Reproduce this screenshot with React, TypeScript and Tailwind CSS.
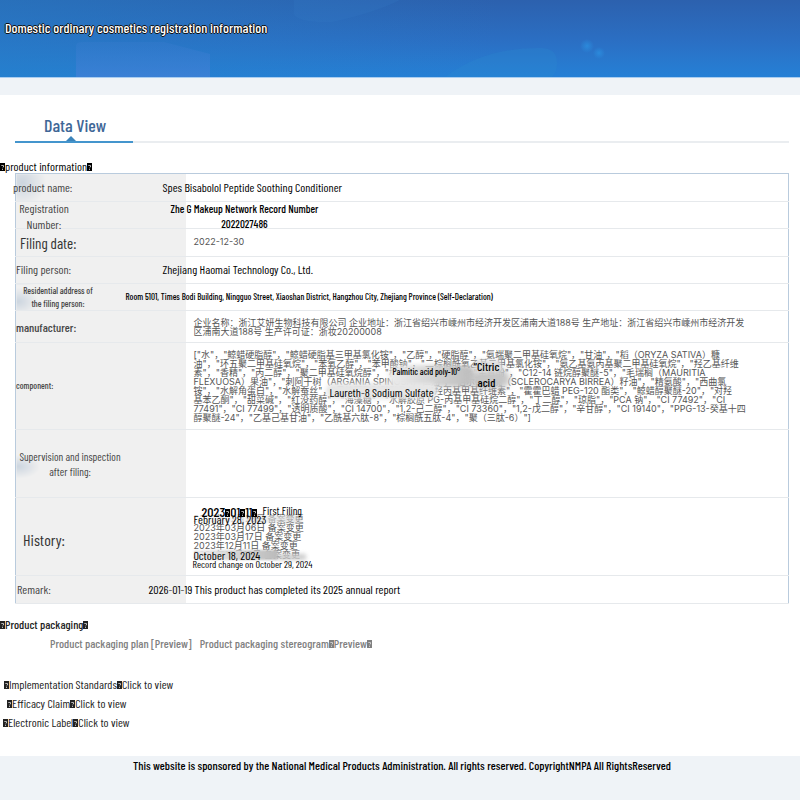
import type { ReactNode } from 'react'

const manufacturer = [
  '企业名称：浙江艾妍生物科技有限公司 企业地址：浙江省绍兴市嵊州市经济开发区浦南大道188号 生产地址：浙江省绍兴市嵊州市经济开发',
  '区浦南大道188号 生产许可证：浙妆20200008',
]

const ingredients = [
  '["水"，"鲸蜡硬脂醇"，"鲸蜡硬脂基三甲基氯化铵"，"乙醇"，"硬脂醇"，"氨端聚二甲基硅氧烷"，"甘油"，"稻（ORYZA SATIVA）糠',
  '油"，"环五聚二甲基硅氧烷"，"苯氧乙醇"，"苯甲酸钠"，"二棕榈酰氧乙基二甲基氯化铵"，"氨乙基氨丙基聚二甲基硅氧烷"，"羟乙基纤维',
  '素"，"香精"，"丙二醇"，"聚二甲基硅氧烷醇"，"棕榈酸"，"柠檬酸"，"生育酚"，"C12-14 链烷醇聚醚-5"，"毛瑞榈（MAURITIA',
  'FLEXUOSA）果油"，"刺阿干树（ARGANIA SPINOSA）仁油"，"伯尔硬胡桃（SCLEROCARYA BIRREA）籽油"，"精氨酸"，"西曲氯',
  '铵"，"水解角蛋白"，"水解蚕丝"，"月桂醇聚醚硫酸酯钠"，"羟丙基甲基纤维素"，"霍霍巴蜡 PEG-120 酯类"，"鲸蜡醇聚醚-20"，"对羟',
  '基苯乙酮"，"甜菜碱"，"红没药醇"，"海藻糖"，"水解胶原 PG-丙基甲基硅烷二醇"，"丁二醇"，"琼脂"，"PCA 钠"，"CI 77492"，"CI',
  '77491"，"CI 77499"，"透明质酸"，"CI 14700"，"1,2-己二醇"，"CI 73360"，"1,2-戊二醇"，"辛甘醇"，"CI 19140"，"PPG-13-癸基十四',
  '醇聚醚-24"，"乙基己基甘油"，"乙酰基六肽-8"，"棕榈酰五肽-4"，"聚（三肽-6）"]',
]

const history = [
  '2023年02月28日 备案变更',
  '2023年03月06日 备案变更',
  '2023年03月17日 备案变更',
  '2023年12月11日 备案变更',
  '2024年10月18日 备案变更',
]

function Mark() {
  return (
    <svg viewBox="0 0 5 8" className="inline-block h-2 w-[5px] align-[0px]" aria-hidden="true">
      <rect width="5" height="8" fill="currentColor" />
      <path d="M1.3 2.5h2.2v1.5l-1 .8M2.5 5.8v1.2" stroke="#ddd" strokeWidth=".8" fill="none" />
    </svg>
  )
}

function Lines({ lines }: { lines: string[] }) {
  return (
    <div className="ml-2 whitespace-nowrap font-['Inter','Noto_Sans_CJK_SC',sans-serif] text-[9px] leading-[9px] text-[#555]">
      {lines.map((line) => (
        <p key={line}>{line}</p>
      ))}
    </div>
  )
}

type RowProps = { height: string; label: ReactNode; labelClass: string; smudge?: string; children?: ReactNode }

function Row({ height, label, labelClass, smudge = '', children }: RowProps) {
  return (
    <tr className={`border-b border-[#e6e9ec] ${height}`}>
      <th
        scope="row"
        className={`w-[170px] bg-[#f0f0f0] p-0 text-left align-middle font-normal text-[#444] ${smudge}`}
      >
        <div className={labelClass}>{label}</div>
      </th>
      <td className="relative p-0 align-middle whitespace-nowrap text-black">{children}</td>
    </tr>
  )
}

function Banner() {
  return (
    <header className="relative h-[78px] overflow-hidden border-b border-[#a9cdf0] bg-linear-to-b from-[#2c61ae] via-[#2b6ec2] to-[#2580d6]">
      <svg viewBox="0 0 800 77" preserveAspectRatio="none" className="absolute inset-0 h-full w-full" aria-hidden="true">
        <defs>
          <linearGradient id="teal" x1="0" x2="1">
            <stop offset="0" stopColor="#2580c8" stopOpacity=".5" />
            <stop offset="1" stopColor="#2580c8" stopOpacity="0" />
          </linearGradient>
          <linearGradient id="panel" x1="0" y1="0" x2="0" y2="1">
            <stop offset="0" stopColor="#3a7ccf" stopOpacity=".3" />
            <stop offset="1" stopColor="#4080d6" stopOpacity=".8" />
          </linearGradient>
          <radialGradient id="dot">
            <stop offset="0" stopColor="#2b8fe0" stopOpacity=".8" />
            <stop offset="1" stopColor="#2b8fe0" stopOpacity="0" />
          </radialGradient>
        </defs>
        <rect width="500" height="77" fill="url(#teal)" />
        <path d="M76 77V46q0-4 6-4h82l46 12v23z" fill="url(#panel)" />
        <path d="M294 0v14q4 9 38 8q42-9 68-22z" fill="#397bc6" opacity=".2" />
        <path d="M445 77q40-30 97-29q19 1 14 23l-4 6z" fill="#2d8bd0" opacity=".25" />
        <circle cx="587" cy="46" r="7" fill="url(#dot)" />
        <circle cx="599" cy="53" r="6" fill="url(#dot)" />
      </svg>
      <h1 className="relative pt-4 pl-[5px] text-sm leading-6 font-medium text-white [text-shadow:1px_0_#111,-1px_0_#111,0_1px_#111,0_-1px_#111]">
        Domestic ordinary cosmetics registration information
      </h1>
    </header>
  )
}

export default function App() {
  return (
    <div className="min-h-screen bg-[#eff3f7] font-['Barlow_Condensed','Noto_Sans_CJK_SC',sans-serif] text-xs text-[#222]">
      <Banner />
      <main className="mt-[17px] bg-white pb-6">
        <div className="mr-[11px] ml-[15px] h-12 border-b-2 border-[#eaedf0]">
          <h2 className="relative h-12 w-[118px] border-b-2 border-[#4495cd] pt-[18px] pl-[29px] text-lg leading-6 font-medium text-[#3f6797]">
            Data View
            <svg viewBox="0 0 10 5" className="absolute bottom-0 left-[51px] h-[5px] w-[10px]" aria-hidden="true">
              <path d="M0 5L5 0l5 5z" fill="#3b83ba" />
            </svg>
          </h2>
        </div>

        <h3 className="pt-[15px] leading-4 text-black">
          <Mark />product information<Mark />
        </h3>
        <div className="mr-[11px] ml-[15px]">
          <table className="-mt-px w-full border-collapse border border-[#b9cbdd]">
            <tbody>
              <Row
                height="h-7"
                label="product name:"
                labelClass="-ml-[3px] pb-0.5 leading-4"
                smudge="bg-[radial-gradient(ellipse_24px_24px_at_6px_8px,#ccd5df,#f0f0f0)]"
              >
                <p className="-ml-[23px] pb-0.5 leading-4">Spes Bisabolol Peptide Soothing Conditioner</p>
              </Row>
              <Row
                height="h-[27px]"
                label={<>Registration<br />Number:</>}
                labelClass="-mt-0.5 -mb-1 w-14 text-center leading-4"
              >
                <p className="-mt-0.5 -mb-1 -ml-[18px] w-[154px] text-center text-[11px] leading-[15px] font-medium">
                  Zhe G Makeup Network Record Number
                  <br />
                  2022027486
                </p>
              </Row>
              <Row height="h-7" label="Filing date:" labelClass="ml-1 text-[15px] leading-4 text-[#333]">
                <div className="pb-0.5">
                  <Lines lines={['2022-12-30']} />
                </div>
              </Row>
              <Row height="h-[27px]" label="Filing person:" labelClass="pb-0.5 leading-4">
                <p className="-ml-[23px] pb-0.5 leading-4">Zhejiang Haomai Technology Co., Ltd.</p>
              </Row>
              <Row
                height="h-[27px]"
                label={<>Residential address of<br />the filing person:</>}
                labelClass="w-[84px] text-center text-[9px] leading-[13px] font-medium"
                smudge="bg-[radial-gradient(ellipse_20px_14px_at_2px_17px,#ccd5df,#f0f0f0)]"
              >
                <p className="-ml-[60px] text-[9px] leading-3 font-medium">
                  Room 5101, Times Bodi Building, Ningguo Street, Xiaoshan District, Hangzhou City, Zhejiang Province
                  (Self-Declaration)
                </p>
              </Row>
              <Row height="h-8" label="manufacturer:" labelClass="leading-4 font-medium">
                <Lines lines={manufacturer} />
              </Row>
              <Row height="h-[87px]" label="component:" labelClass="text-[9px] leading-3 font-medium">
                <Lines lines={ingredients} />
                <div className="absolute top-[22px] left-[202px] h-[22px] w-[88px] rounded-full bg-linear-to-r from-[#eee] to-[#bbb] blur-[2px]" />
                <div className="absolute top-[26px] left-[284px] h-5 w-10 rounded-full bg-[#c6c6c6] blur-[3px]" />
                <div className="absolute top-[17px] left-[288px] h-3 w-7 bg-[#ddd] blur-[2px]" />
                <div className="absolute top-10 left-[140px] h-4 w-[112px] rounded-full bg-[#e6e6e6] blur-[2px]" />
                <span className="absolute top-[23px] left-[207px] text-[9px] leading-3 font-medium">
                  Palmitic acid poly-10°
                </span>
                <span className="absolute top-[41px] left-36 leading-4">Laureth-8 Sodium Sulfate</span>
                <span className="absolute top-[15px] left-[288px] text-center leading-4 font-medium">
                  “Citric
                  <br />
                  acid
                </span>
              </Row>
              <Row
                height="h-[68px]"
                label={<>Supervision and inspection<br />after filing:</>}
                labelClass="w-[108px] text-center text-[11px] leading-[15px]"
                smudge="bg-[radial-gradient(ellipse_22px_12px_at_2px_36px,#ccd5df,#f0f0f0)]"
              />
              <Row height="h-[78px]" label="History:" labelClass="ml-[7px] pt-1.5 text-base leading-4 text-[#333]">
                <Lines lines={history} />
                <div className="absolute top-[17px] left-2 h-2 w-[108px] bg-linear-to-r from-white to-[#ccc8] blur-[1px]" />
                <div className="absolute top-[52px] left-2 h-2.5 w-[84px] bg-linear-to-r from-[#eee] to-[#bbb] blur-[1px]" />
                <div className="absolute top-[56px] left-[92px] h-1.5 w-7 bg-[#ccc] blur-[2px]" />
                <span className="absolute top-1.5 left-4 text-sm leading-4 font-medium">
                  2023<Mark />01<Mark />11<Mark />
                </span>
                <span className="absolute top-[7px] left-[77px] text-[11px] leading-3">First Filing</span>
                <span className="absolute top-[13px] left-2 leading-4">February 28, 2023</span>
                <span className="absolute top-[49px] left-2 leading-4">October 18, 2024</span>
                <span className="absolute top-[60px] left-[7px] text-[10px] leading-3">
                  Record change on October 29, 2024
                </span>
              </Row>
              <Row height="h-7" label="Remark:" labelClass="ml-px pb-0.5 leading-4">
                <p className="-ml-[37px] pb-0.5 leading-4">
                  2026-01-19 This product has completed its 2025 annual report
                </p>
              </Row>
            </tbody>
          </table>
        </div>

        <h3 className="mt-2.5 leading-5 font-medium">
          <Mark />Product packaging<Mark />
        </h3>
        <div className="ml-[50px] flex gap-2 leading-[19px] font-medium text-[#808080]">
          <a href="#plan">Product packaging plan [Preview]</a>
          <a href="#stereogram">
            Product packaging stereogram<Mark />Preview<Mark />
          </a>
        </div>
        <ul className="mt-[22px] leading-[19px]">
          <li className="ml-1">
            <Mark />Implementation Standards<Mark /><a href="#standards">Click to view</a>
          </li>
          <li className="ml-[7px]">
            <Mark />Efficacy Claim<Mark /><a href="#efficacy">Click to view</a>
          </li>
          <li className="ml-[3px]">
            <Mark />Electronic Label<Mark /><a href="#label">Click to view</a>
          </li>
        </ul>
      </main>
      <footer className="pl-1 text-center leading-[18px] font-medium text-black">
        This website is sponsored by the National Medical Products Administration. All rights reserved. CopyrightNMPA All
        RightsReserved
      </footer>
    </div>
  )
}
